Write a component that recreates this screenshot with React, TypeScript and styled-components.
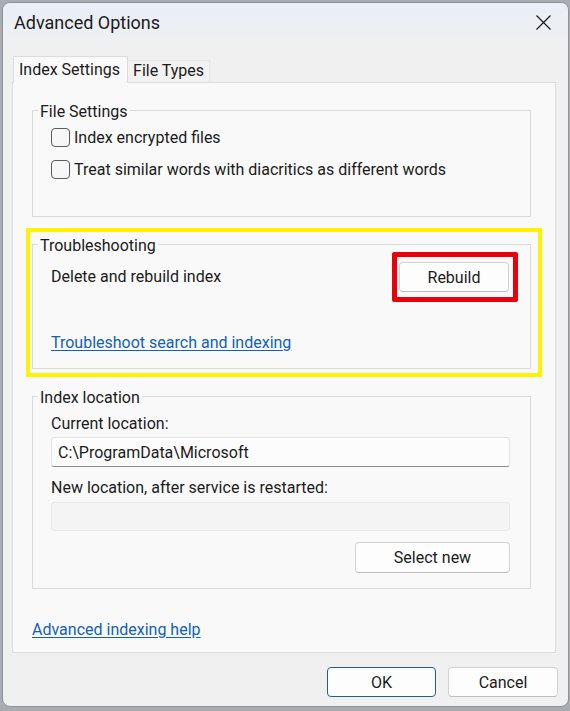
import React from "react";
import styled, { createGlobalStyle } from "styled-components";

const GlobalStyle = createGlobalStyle`
  html, body {
    margin: 0;
    padding: 0;
    background: #a9adb2;
    width: 570px;
    height: 711px;
    overflow: hidden;
  }
  * { box-sizing: border-box; }
  body {
    font-family: Roboto, "Liberation Sans", sans-serif;
    color: #1b1b1b;
  }
`;

const Window = styled.div`
  margin: 2px 1px 0 2px;
  height: 705px;
  display: flex;
  flex-direction: column;
  background: #f0f0f0;
  border: 1px solid #8e9296;
  border-radius: 8px;
  overflow: hidden;
`;

const TitleBar = styled.div`
  height: 53px;
  flex: none;
  display: flex;
  align-items: flex-start;
  justify-content: space-between;
  padding: 9px 17px 0 11px;
  background: linear-gradient(#e9eff7, #f0f0f0);
`;

const Title = styled.div`
  font-size: 18px;
  line-height: 22px;
`;

const CloseButton = styled.div`
  width: 15px;
  height: 15px;
  margin-top: 3px;
  display: flex;
`;

const Body = styled.div`
  flex: 1;
  display: flex;
  flex-direction: column;
  padding: 0 12px 0 9px;
`;

const TabStrip = styled.div`
  height: 26px;
  flex: none;
  display: flex;
  align-items: flex-end;
  padding-left: 1px;
`;

const Tab = styled.div<{ $active?: boolean }>`
  font-size: 16px;
  line-height: 20px;
  position: relative;
  z-index: ${(p) => (p.$active ? 1 : 0)};
  height: ${(p) => (p.$active ? "27px" : "22px")};
  margin-bottom: ${(p) => (p.$active ? "-1px" : "0")};
  padding: ${(p) => (p.$active ? "3px 7px 0 5px" : "0 5px 0 5px")};
  background: ${(p) => (p.$active ? "#f9f9f9" : "#f2f2f2")};
  border: 1px solid ${(p) => (p.$active ? "#dcdcdc" : "#e6e6e6")};
  border-bottom: none;
  border-left: ${(p) => (p.$active ? "1px solid #dcdcdc" : "none")};
`;

const Panel = styled.div`
  flex: 1;
  display: flex;
  flex-direction: column;
  background: #f9f9f9;
  border: 1px solid #dcdcdc;
  padding: 15px 24px 0 19px;
`;

const Group = styled.fieldset<{ $mt?: number }>`
  margin: ${(p) => p.$mt ?? 0}px 0 0 0;
  padding: 0;
  border: 1px solid #dadada;
  min-width: 0;
`;

const Legend = styled.legend`
  font-size: 16px;
  line-height: 20px;
  padding: 4px 2px 0;
  margin-left: 5px;
`;

const GroupContent = styled.div<{ $pad: string }>`
  display: flex;
  flex-direction: column;
  padding: ${(p) => p.$pad};
`;

const CheckRow = styled.label`
  display: flex;
  align-items: center;
  gap: 4px;
  height: 19px;
  font-size: 16px;
  line-height: 20px;
  & + & {
    margin-top: 13px;
  }
`;

const CheckBox = styled.input`
  appearance: none;
  margin: 0;
  width: 19px;
  height: 19px;
  border: 1px solid #5b5b5b;
  border-radius: 4px;
  background: #f7f7f7;
  flex: none;
`;

const Highlight = styled.div`
  margin: 11px -11px 0 -6px;
  border: 4px solid #fff200;
  padding: 0 7px 4px 2px;
`;

const ActionRow = styled.div`
  display: flex;
  align-items: center;
  justify-content: space-between;
  height: 30px;
  font-size: 16px;
  line-height: 20px;
`;

const ButtonSlot = styled.div`
  position: relative;
  display: flex;
`;

const RedMark = styled.div`
  position: absolute;
  left: -7px;
  right: -9px;
  top: -10px;
  bottom: -10px;
  border: 5px solid #e8000b;
  border-radius: 2px;
  pointer-events: none;
`;

const Button = styled.button<{ $w: number; $h?: number; $primary?: boolean }>`
  width: ${(p) => p.$w}px;
  height: ${(p) => p.$h ?? 30}px;
  margin: 0;
  padding: 0;
  font-family: inherit;
  font-size: 16px;
  color: #1b1b1b;
  background: #fdfdfd;
  border: 1px solid ${(p) => (p.$primary ? "#245f86" : "#d2d2d2")};
  border-bottom-color: ${(p) => (p.$primary ? "#245f86" : "#bdbdbd")};
  border-radius: 4px;
`;

const Link = styled.a<{ $mt: number }>`
  align-self: flex-start;
  margin-top: ${(p) => p.$mt}px;
  font-size: 16px;
  line-height: 20px;
  color: #1262b3;
  text-decoration: underline;
  text-underline-offset: 2px;
`;

const FieldLabel = styled.div<{ $mt: number }>`
  margin-top: ${(p) => p.$mt}px;
  font-size: 16px;
  line-height: 20px;
`;

const Field = styled.input<{ $disabled?: boolean; $mt: number }>`
  margin-top: ${(p) => p.$mt}px;
  height: ${(p) => (p.$disabled ? 29 : 30)}px;
  width: 100%;
  padding: 0 6px;
  font-family: inherit;
  font-size: 16px;
  color: #1b1b1b;
  outline: none;
  border-radius: 3px;
  background: ${(p) => (p.$disabled ? "#f4f4f4" : "#fcfcfc")};
  border: 1px solid ${(p) => (p.$disabled ? "#e9e9e9" : "#e3e3e3")};
  border-bottom-color: ${(p) => (p.$disabled ? "#e9e9e9" : "#8a8a8a")};
`;

const RightButton = styled.div`
  align-self: flex-end;
  margin-top: 11px;
  display: flex;
`;

const Footer = styled.div`
  flex: none;
  display: flex;
  justify-content: flex-end;
  gap: 12px;
  padding: 14px 10px 9px 0;
`;

export default function App() {
  return (
    <>
      <GlobalStyle />
      <Window>
        <TitleBar>
          <Title>Advanced Options</Title>
          <CloseButton>
            <svg width="15" height="15" viewBox="0 0 15 15">
              <path d="M0.5 0.5 L14.5 14.5 M14.5 0.5 L0.5 14.5" stroke="#1b1b1b" strokeWidth="1.2" />
            </svg>
          </CloseButton>
        </TitleBar>
        <Body>
          <TabStrip>
            <Tab $active>Index Settings</Tab>
            <Tab>File Types</Tab>
          </TabStrip>
          <Panel>
            <Group>
              <Legend>File Settings</Legend>
              <GroupContent $pad="6px 18px 37px 18px">
                <CheckRow>
                  <CheckBox type="checkbox" />
                  Index encrypted files
                </CheckRow>
                <CheckRow>
                  <CheckBox type="checkbox" />
                  Treat similar words with diacritics as different words
                </CheckRow>
              </GroupContent>
            </Group>

            <Highlight>
              <Group>
                <Legend>Troubleshooting</Legend>
                <GroupContent $pad="6px 21px 15px 18px">
                  <ActionRow>
                    <span>Delete and rebuild index</span>
                    <ButtonSlot>
                      <Button $w={110}>Rebuild</Button>
                      <RedMark />
                    </ButtonSlot>
                  </ActionRow>
                  <Link href="#" $mt={41}>
                    Troubleshoot search and indexing
                  </Link>
                </GroupContent>
              </Group>
            </Highlight>

            <Group $mt={7}>
              <Legend>Index location</Legend>
              <GroupContent $pad="6px 20px 15px 18px">
                <FieldLabel $mt={0}>Current location:</FieldLabel>
                <Field $mt={3} readOnly value="C:\ProgramData\Microsoft" />
                <FieldLabel $mt={11}>New location, after service is restarted:</FieldLabel>
                <Field $mt={4} $disabled readOnly value="" />
                <RightButton>
                  <Button $w={155} $h={31}>Select new</Button>
                </RightButton>
              </GroupContent>
            </Group>

            <Link href="#" $mt={31}>
              Advanced indexing help
            </Link>
          </Panel>
        </Body>
        <Footer>
          <Button $w={109} $primary>OK</Button>
          <Button $w={110}>Cancel</Button>
        </Footer>
      </Window>
    </>
  );
}
